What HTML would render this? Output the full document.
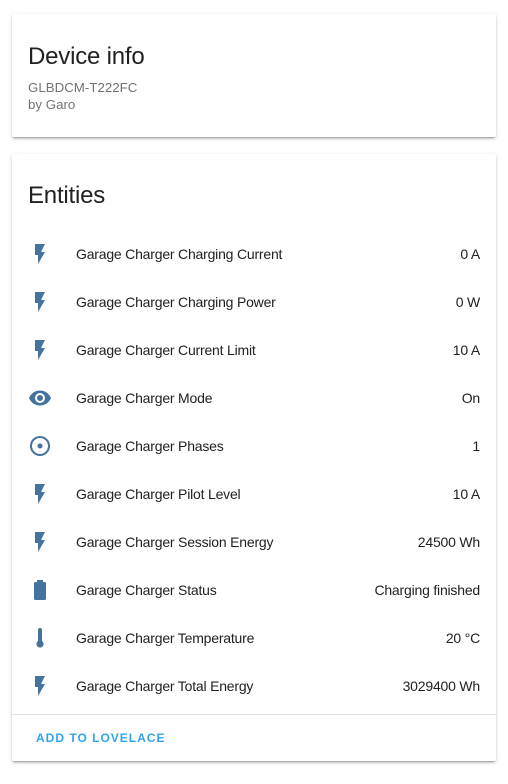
<!DOCTYPE html>
<html><head><meta charset="utf-8"><style>
*{box-sizing:border-box;margin:0;padding:0}
body{width:508px;height:784px;background:#fff;font-family:"Liberation Sans",Roboto,sans-serif;color:#212121;position:relative;overflow:hidden}
.card{position:absolute;left:12px;width:484px;background:#fff;border-radius:2px;box-shadow:0 2px 2px 0 rgba(0,0,0,.14),0 1px 5px 0 rgba(0,0,0,.12),0 3px 1px -2px rgba(0,0,0,.2)}
h1{font-weight:400;font-size:24px;position:absolute;left:16px;letter-spacing:-0.2px}
.sub{position:absolute;left:16px;font-size:13.3px;color:#727272;line-height:17px}
.row{position:absolute;left:0;width:484px;height:48px;display:flex;align-items:center}
.row svg{position:absolute;left:16px;top:12px;width:24px;height:24px;fill:#44739e}
.row .n{position:absolute;left:64px;font-size:14px;letter-spacing:-0.2px}
.row .v{position:absolute;right:16px;font-size:14px;letter-spacing:-0.2px}
.div{position:absolute;left:0;top:560px;width:484px;height:1px;background:#e0e0e0}
.btn{position:absolute;left:24px;top:577px;font-size:12px;font-weight:700;letter-spacing:1px;color:#2ea3f2}
</style></head><body>
<div class="card" style="top:14px;height:123px">
<h1 style="top:29px">Device info</h1>
<div class="sub" style="top:65px">GLBDCM-T222FC<br>by Garo</div>
</div>
<div class="card" style="top:154px;height:607px">
<h1 style="top:28px">Entities</h1>
<div class="row" style="top:76px"><svg viewBox="0 0 24 24"><path d="M7,2V13H10V22L17,10H13L17,2H7Z"/></svg><span class="n">Garage Charger Charging Current</span><span class="v">0 A</span></div>
<div class="row" style="top:124px"><svg viewBox="0 0 24 24"><path d="M7,2V13H10V22L17,10H13L17,2H7Z"/></svg><span class="n">Garage Charger Charging Power</span><span class="v">0 W</span></div>
<div class="row" style="top:172px"><svg viewBox="0 0 24 24"><path d="M7,2V13H10V22L17,10H13L17,2H7Z"/></svg><span class="n">Garage Charger Current Limit</span><span class="v">10 A</span></div>
<div class="row" style="top:220px"><svg viewBox="0 0 24 24"><path d="M12,9A3,3 0 0,0 9,12A3,3 0 0,0 12,15A3,3 0 0,0 15,12A3,3 0 0,0 12,9M12,17A5,5 0 0,1 7,12A5,5 0 0,1 12,7A5,5 0 0,1 17,12A5,5 0 0,1 12,17M12,4.5C7,4.5 2.730,7.61 1,12C2.73,16.39 7,19.5 12,19.5C17,19.5 21.27,16.39 23,12C21.27,7.61 17,4.5 12,4.5Z"/></svg><span class="n">Garage Charger Mode</span><span class="v">On</span></div>
<div class="row" style="top:268px"><svg viewBox="0 0 24 24"><path d="M12,20A8,8 0 0,1 4,12A8,8 0 0,1 12,4A8,8 0 0,1 20,12A8,8 0 0,1 12,20M12,2A10,10 0 0,0 2,12A10,10 0 0,0 12,22A10,10 0 0,0 22,12A10,10 0 0,0 12,2M12,9.5A2.5,2.5 0 0,0 9.5,12A2.5,2.5 0 0,0 12,14.5A2.5,2.5 0 0,0 14.5,12A2.5,2.5 0 0,0 12,9.5Z"/></svg><span class="n">Garage Charger Phases</span><span class="v">1</span></div>
<div class="row" style="top:316px"><svg viewBox="0 0 24 24"><path d="M7,2V13H10V22L17,10H13L17,2H7Z"/></svg><span class="n">Garage Charger Pilot Level</span><span class="v">10 A</span></div>
<div class="row" style="top:364px"><svg viewBox="0 0 24 24"><path d="M7,2V13H10V22L17,10H13L17,2H7Z"/></svg><span class="n">Garage Charger Session Energy</span><span class="v">24500 Wh</span></div>
<div class="row" style="top:412px"><svg viewBox="0 0 24 24"><path d="M16.67,4H15V2H9V4H7.33A1.33,1.33 0 0,0 6,5.33V20.67C6,21.4 6.6,22 7.33,22H16.67A1.33,1.33 0 0,0 18,20.67V5.33C18,4.6 17.4,4 16.67,4Z"/></svg><span class="n">Garage Charger Status</span><span class="v">Charging finished</span></div>
<div class="row" style="top:460px"><svg viewBox="0 0 24 24"><path d="M14,15V4A2,2 0 0,0 10,4V15A3.6,3.6 0 1,0 14,15Z"/></svg><span class="n">Garage Charger Temperature</span><span class="v">20 °C</span></div>
<div class="row" style="top:508px"><svg viewBox="0 0 24 24"><path d="M7,2V13H10V22L17,10H13L17,2H7Z"/></svg><span class="n">Garage Charger Total Energy</span><span class="v">3029400 Wh</span></div>
<div class="div"></div>
<div class="btn">ADD TO LOVELACE</div>
</div>
</body></html>
